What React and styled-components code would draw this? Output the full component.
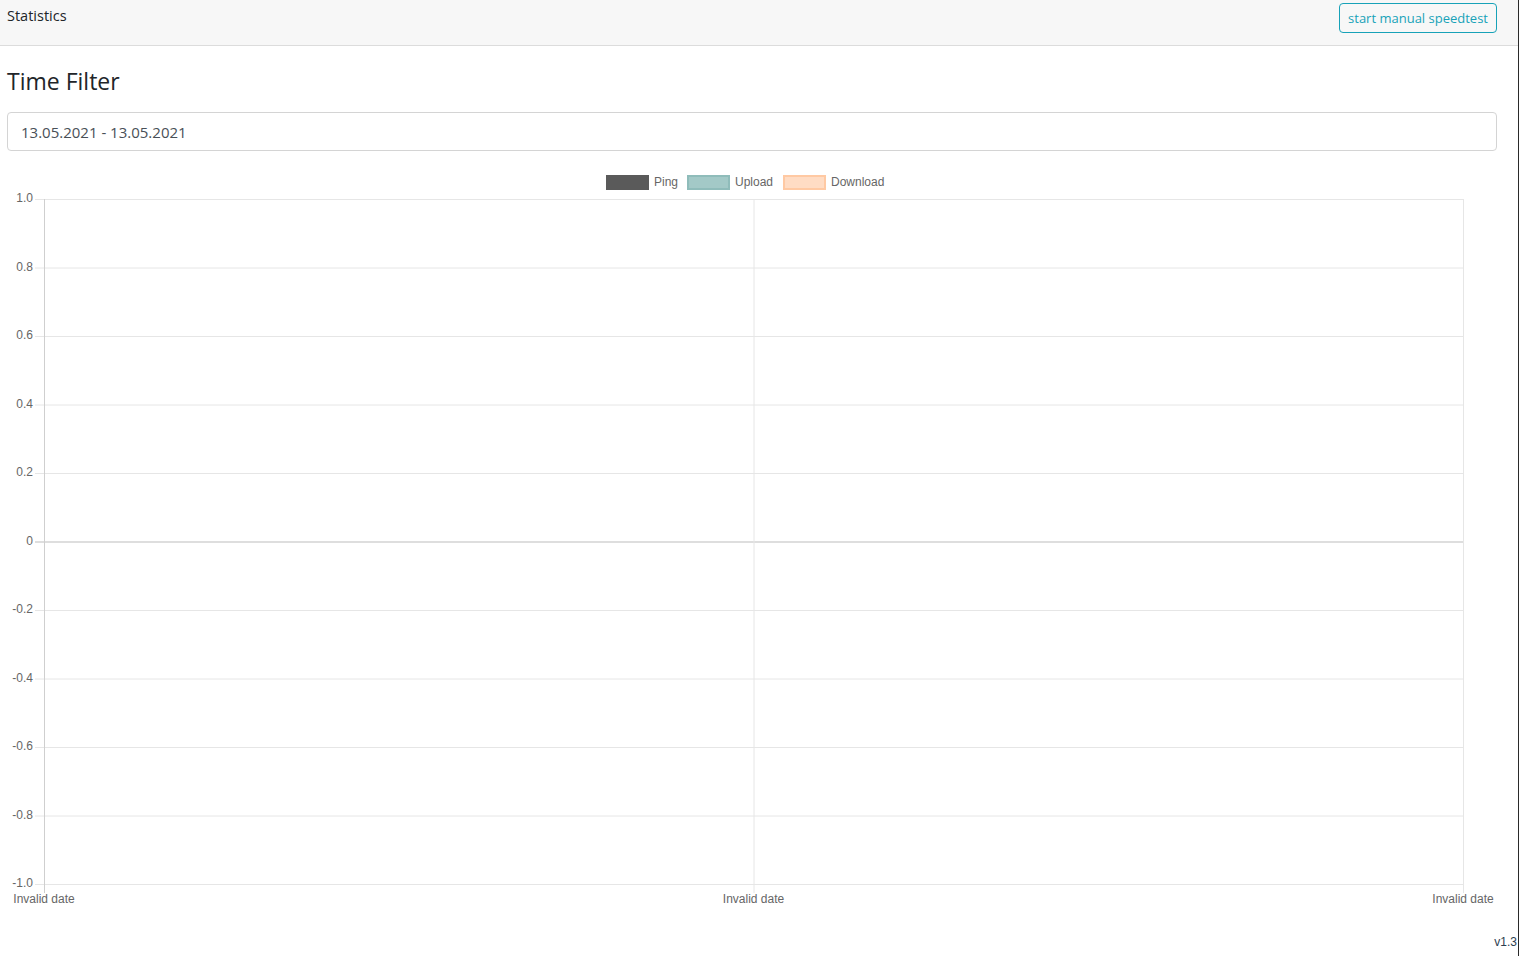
import React from "react";
import styled, { createGlobalStyle } from "styled-components";

const GlobalStyle = createGlobalStyle`
  html, body {
    margin: 0;
    padding: 0;
    background: #fff;
  }
  body {
    font-family: "Open Sans", "Noto Sans", sans-serif;
    color: #212529;
  }
  #root {
    min-height: 100vh;
    box-sizing: border-box;
    border-right: 1px solid #2a2a2a;
  }
`;

const TICKS = [1.0, 0.8, 0.6, 0.4, 0.2, 0, -0.2, -0.4, -0.6, -0.8, -1.0];
const LEGEND = [
  { label: "Ping", fill: "#5a5a5a", stroke: "#5a5a5a" },
  { label: "Upload", fill: "#a3c9c7", stroke: "#8fbcba" },
  { label: "Download", fill: "#ffdcc4", stroke: "#ffc9a3" },
];

// chart coordinates are page coordinates; the viewBox starts where the svg sits
const Chart = () => {
  const left = 44;
  const right = 1463;
  const top = 199;
  const bottom = 884;
  const step = (bottom - top) / 10;
  const mid = (left + right) / 2;
  const legendX = [606, 687, 783];

  return (
    <ChartSvg width="1519" height="770" viewBox="0 151 1519 770">
      {LEGEND.map((l, i) => (
        <g key={l.label}>
          <rect
            x={legendX[i] + 1}
            y={176}
            width={41}
            height={13}
            fill={l.fill}
            stroke={l.stroke}
            strokeWidth="2"
          />
          <text x={legendX[i] + 48} y={186} className="lbl">
            {l.label}
          </text>
        </g>
      ))}

      {TICKS.map((t, i) => {
        const y = top + i * step;
        const zero = t === 0;
        return (
          <g key={t}>
            <line
              x1={35}
              x2={right}
              y1={y + 0.5}
              y2={y + 0.5}
              stroke={zero ? "#bdbdbd" : "#e6e6e6"}
              strokeWidth="1"
            />
            <text x={33} y={y + 3} textAnchor="end" className="lbl">
              {t === 0 ? "0" : t.toFixed(1)}
            </text>
          </g>
        );
      })}

      {[left, mid, right].map((x, i) => (
        <g key={i}>
          <line
            x1={x + 0.5}
            x2={x + 0.5}
            y1={top}
            y2={bottom + 9}
            stroke={i === 0 ? "#cfcfcf" : "#e6e6e6"}
          />
          <text x={x} y={903} textAnchor="middle" className="lbl">
            Invalid date
          </text>
        </g>
      ))}
    </ChartSvg>
  );
};

export default function App() {
  return (
    <>
      <GlobalStyle />
      <Navbar>
        <Brand>Statistics</Brand>
        <OutlineButton>start manual speedtest</OutlineButton>
      </Navbar>
      <Content>
        <Title>Time Filter</Title>
        <DateInput readOnly value="13.05.2021 - 13.05.2021" />
      </Content>
      <Chart />
      <Footer>v1.3</Footer>
    </>
  );
}

const Navbar = styled.header`
  height: 46px;
  box-sizing: border-box;
  background: #f7f7f7;
  border-bottom: 1px solid #dcdcdc;
  display: flex;
  justify-content: space-between;
  align-items: flex-start;
  padding: 0 21px 0 7px;
`;

const Brand = styled.div`
  font-size: 14.5px;
  line-height: 20px;
  padding-top: 6px;
  color: #212529;
`;

const OutlineButton = styled.button`
  margin-top: 3px;
  height: 30px;
  padding: 0 8px;
  background: transparent;
  border: 1px solid #17a2b8;
  border-radius: 4px;
  color: #17a2b8;
  font-family: "Open Sans", "Noto Sans", sans-serif;
  font-size: 13px;
  cursor: pointer;
`;

const Content = styled.main`
  padding: 0 21px 0 7px;
`;

const Title = styled.h4`
  margin: 0;
  padding-top: 20px;
  font-size: 23px;
  font-weight: 400;
  line-height: 30px;
  color: #212529;
`;

const DateInput = styled.input`
  display: block;
  box-sizing: border-box;
  width: 100%;
  height: 39px;
  margin-top: 16px;
  padding: 0 13px;
  border: 1px solid #d4d4d4;
  border-radius: 4px;
  font-family: "Open Sans", "Noto Sans", sans-serif;
  font-size: 15px;
  color: #495057;
  outline: none;
`;

const ChartSvg = styled.svg`
  display: block;

  .lbl {
    font-family: "Liberation Sans", Arial, sans-serif;
    font-size: 12px;
    fill: #666;
  }
`;

const Footer = styled.div`
  text-align: right;
  padding-right: 1px;
  margin-top: 14px;
  font-family: "Liberation Sans", Arial, sans-serif;
  font-size: 12px;
  color: #2c3e50;
`;
